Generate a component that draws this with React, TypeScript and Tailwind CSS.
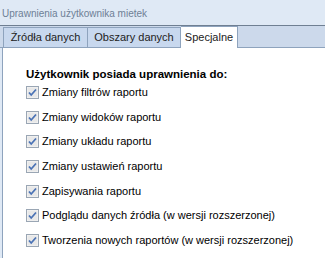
const items = [
  'Zmiany filtrów raportu',
  'Zmiany widoków raportu',
  'Zmiany układu raportu',
  'Zmiany ustawień raportu',
  'Zapisywania raportu',
  'Podglądu danych źródła (w wersji rozszerzonej)',
  'Tworzenia nowych raportów (w wersji rozszerzonej)',
]

function Check() {
  return (
    <svg width="13" height="13" viewBox="0 0 13 13" className="shrink-0">
      <rect x="0.5" y="0.5" width="12" height="12" fill="#f6f6f6" stroke="#9aa6b4" />
      <rect x="1.5" y="1.5" width="10" height="10" fill="#e8e8e8" />
      <path d="M3 6.5 L5.2 9 L10 3.5" fill="none" stroke="#4a72b5" strokeWidth="1.8" />
    </svg>
  )
}

export default function App() {
  return (
    <div className="w-[325px] h-[258px] bg-[#dfe9f5] flex flex-col overflow-hidden text-black" style={{ fontFamily: '"Liberation Sans", Arial, sans-serif' }}>
      <div className="h-[26px] shrink-0 border-b border-[#6f7f92] pl-[2px] pt-[7px] text-[10px] leading-[13px] text-[#6e8096]">
        Uprawnienia użytkownika mietek
      </div>
      <div className="h-[22px] shrink-0 bg-[#ccd9eb] border-b border-[#8ea3bd] flex items-end pl-[3px] text-[11px]">
        <div className="h-[20px] w-[85px] bg-[#c8d8ee] border border-b-0 border-[#8ea3bd] flex items-center justify-center text-[#222]">
          Źródła danych
        </div>
        <div className="h-[20px] w-[93px] bg-[#c8d8ee] border border-l-0 border-b-0 border-[#8ea3bd] flex items-center justify-center text-[#222]">
          Obszary danych
        </div>
        <div className="h-[22px] w-[57px] -mb-px bg-white border border-l-0 border-b-0 border-[#8ea3bd] flex items-center justify-center text-[#222]">
          Specjalne
        </div>
      </div>
      <div className="flex-1 ml-[2px] bg-white border-l border-[#8ea3bd] pl-[23px] pt-[19px]">
        <div className="text-[11.5px] font-bold leading-[14px]">Użytkownik posiada uprawnienia do:</div>
        <div className="mt-[5px] flex flex-col gap-[11.7px]">
          {items.map((t) => (
            <div key={t} className="flex items-center gap-[3px] h-[13px] text-[11px] leading-[13px]">
              <Check />
              <span>{t}</span>
            </div>
          ))}
        </div>
      </div>
    </div>
  )
}
